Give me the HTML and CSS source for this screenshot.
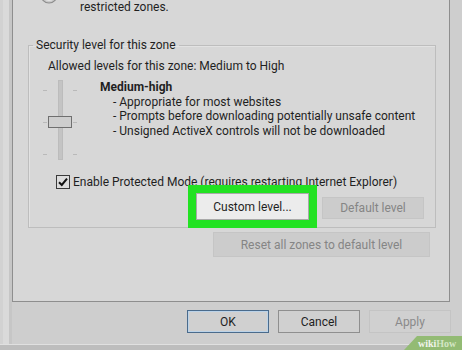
FILE: index.html
```html
<!DOCTYPE html>
<html lang="en">
<head>
<meta charset="utf-8">
<title>Internet Options - Security</title>
<link rel="stylesheet" href="styles.css">
</head>
<body>
<div class="window">
  <div class="tabpage">
    <div class="zone-head">
      <svg class="zone-icon" width="18" height="18" viewBox="0 0 18 18" aria-hidden="true">
        <circle cx="9" cy="9" r="8" fill="#c9c9c9" stroke="#8c8c8c" stroke-width="1.2"/>
        <path d="M3 12 Q9 17 15 12" fill="none" stroke="#e6e6e6" stroke-width="1"/>
      </svg>
      <span class="zone-text">restricted zones.</span>
    </div>
    <fieldset class="group">
      <legend class="group-title">Security level for this zone</legend>
      <div class="allowed">Allowed levels for this zone: Medium to High</div>
      <div class="level-row">
        <svg class="slider" width="35" height="80" viewBox="0 0 35 80" aria-hidden="true">
          <g stroke="#b9b9b9" stroke-width="1">
            <line x1="0" y1="10.5" x2="4" y2="10.5"/>
            <line x1="30" y1="10.5" x2="34" y2="10.5"/>
            <line x1="0" y1="42.5" x2="4" y2="42.5"/>
            <line x1="30" y1="42.5" x2="34" y2="42.5"/>
            <line x1="0" y1="74.5" x2="4" y2="74.5"/>
            <line x1="30" y1="74.5" x2="34" y2="74.5"/>
          </g>
          <rect x="15.5" y="0.5" width="4" height="79" fill="#c4c4c4" stroke="#bcbcbc"/>
          <rect x="5.5" y="36.5" width="23" height="11" fill="#cecece" stroke="#6f6f6f"/>
        </svg>
        <div class="level-desc">
          <div class="level-name">Medium-high</div>
          <div class="level-item">- Appropriate for most websites</div>
          <div class="level-item">- Prompts before downloading potentially unsafe content</div>
          <div class="level-item">- Unsigned ActiveX controls will not be downloaded</div>
        </div>
      </div>
      <div class="protected">
        <svg class="check" width="14" height="14" viewBox="0 0 14 14" aria-hidden="true">
          <rect x="0.5" y="0.5" width="13" height="13" fill="#dcdcdc" stroke="#3a3a3a"/>
          <path d="M3 7.2 L5.8 10 L11 3.6" fill="none" stroke="#111" stroke-width="2"/>
        </svg>
        <span class="protected-text">Enable Protected Mode (requires restarting Internet Explorer)</span>
      </div>
      <div class="level-buttons">
        <button class="btn btn-custom">Custom level...</button>
        <button class="btn btn-disabled btn-default" disabled>Default level</button>
      </div>
    </fieldset>
    <div class="reset-row">
      <button class="btn btn-disabled btn-reset" disabled>Reset all zones to default level</button>
    </div>
  </div>
  <div class="dialog-buttons">
    <button class="btn btn-dialog btn-ok">OK</button>
    <button class="btn btn-dialog">Cancel</button>
    <button class="btn btn-dialog btn-apply" disabled>Apply</button>
  </div>
  <div class="frame-bottom"></div>
  <div class="wikihow"><span class="wh-wiki">wiki</span><span class="wh-how">How</span></div>
</div>
</body>
</html>
```

FILE: styles.css
```css
* { box-sizing: border-box; }

html, body {
  margin: 0;
  padding: 0;
}

body {
  font-family: Roboto, "Liberation Sans", sans-serif;
  font-size: 12px;
  color: #1f1f1f;
  background: #cecece;
}

.window {
  position: relative;
  width: 462px;
  height: 350px;
  overflow: hidden;
  display: flex;
  flex-direction: column;
  background:
    linear-gradient(90deg, #d2d2d2 0 3px, #dadada 3px 9px, #c6c6c6 9px 12px, transparent 12px),
    #cecece;
}

.tabpage {
  display: flex;
  flex-direction: column;
  margin-left: 12px;
  width: 438px;
  height: 302px;
  flex: none;
  background: #d7d7d7;
  border-left: 1px solid #8e8e8e;
  border-right: 1px solid #8e8e8e;
  border-bottom: 1px solid #8e8e8e;
}

.zone-head {
  display: flex;
  align-items: flex-start;
  height: 14px;
  line-height: 14px;
}

.zone-icon {
  margin-left: 27px;
  margin-top: -14px;
  flex: none;
}

.zone-text {
  margin-left: 22px;
}

.group {
  margin: 24px 0 0 15px;
  width: 408px;
  padding: 7px 0 7px 0;
  border: 1px solid #bdbdbd;
  box-shadow: inset 1px 1px 0 #e2e2e2;
}

.group-title {
  margin-left: 4px;
  padding: 0 3px;
  line-height: 14px;
}

.allowed {
  margin-left: 19px;
  line-height: 14px;
}

.level-row {
  display: flex;
  margin-top: 7px;
  height: 80px;
}

.slider {
  margin-left: 14px;
  flex: none;
}

.level-desc {
  margin-left: 22px;
  line-height: 14.5px;
}

.level-name {
  font-weight: bold;
}

.level-item {
  padding-left: 13px;
}

.protected {
  display: flex;
  align-items: center;
  margin-top: 14px;
  height: 16px;
  line-height: 16px;
}

.check {
  margin-left: 27px;
  flex: none;
}

.protected-text {
  margin-left: 3px;
}

.level-buttons {
  display: flex;
  justify-content: flex-end;
  align-items: flex-end;
  gap: 13px;
  margin-top: 3px;
  padding-right: 11px;
}

.btn {
  font-family: inherit;
  font-size: 12px;
  color: #1f1f1f;
  padding: 0;
  margin: 0;
  background: #d3d3d3;
  border: 1px solid #9a9a9a;
  border-radius: 0;
}

.btn-custom {
  position: relative;
  width: 113px;
  height: 27px;
  background: #ececec;
  border-color: #a9a9a9;
  outline: 8px solid #22e222;
}

.btn-disabled {
  color: #858585;
  background: #cccccc;
  border-color: #c5c5c5;
}

.btn-default {
  width: 102px;
  height: 22px;
  margin-bottom: 1px;
}

.reset-row {
  display: flex;
  justify-content: flex-end;
  margin-top: 4px;
  padding-right: 19px;
}

.btn-reset {
  width: 217px;
  height: 25px;
}

.dialog-buttons {
  display: flex;
  justify-content: flex-end;
  gap: 9px;
  margin-top: 8px;
  padding-right: 11px;
}

.btn-dialog {
  width: 82px;
  height: 23px;
  background: #d0d0d0;
  border-color: #8f8f8f;
}

.btn-ok {
  border-color: #4a6b8c;
  box-shadow: inset 0 0 0 1px #bcd3e8;
}

.btn-apply {
  color: #8a8a8a;
  border-color: #c4c4c4;
}

.frame-bottom {
  margin-top: auto;
  height: 6px;
  background: #bdbdbd;
  border-top: 1px solid #e0e0e0;
}

.wikihow {
  position: absolute;
  right: 0;
  bottom: 0;
  width: 58px;
  height: 14px;
  padding-left: 14px;
  background: #93bb74;
  clip-path: polygon(13px 0, 100% 0, 100% 100%, 0 100%);
  font-family: "Liberation Serif", serif;
  font-weight: bold;
  font-size: 10px;
  line-height: 15px;
  white-space: nowrap;
}

.wh-wiki {
  color: #f1f4ee;
}

.wh-how {
  color: #d3e6c4;
}
```
